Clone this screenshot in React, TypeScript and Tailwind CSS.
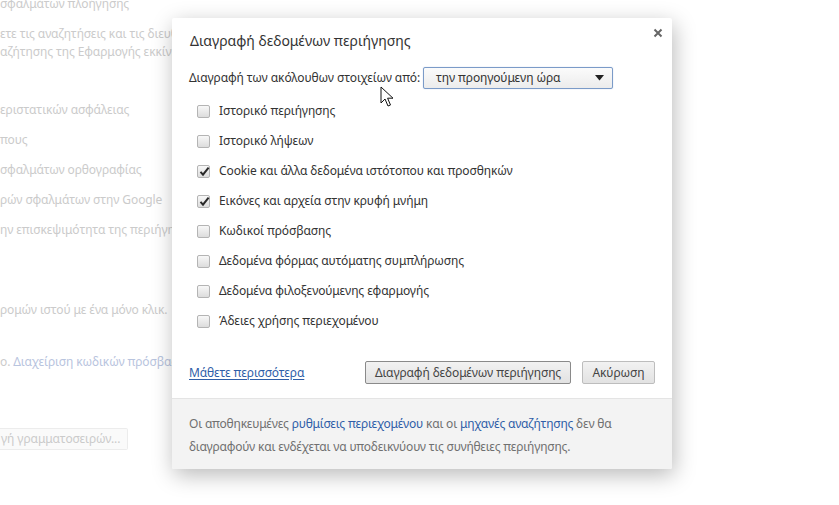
const font = { fontFamily: '"Noto Sans", "Open Sans", sans-serif' }

const items = [
    { label: 'Ιστορικό περιήγησης', checked: false },
    { label: 'Ιστορικό λήψεων', checked: false },
    { label: 'Cookie και άλλα δεδομένα ιστότοπου και προσθηκών', checked: true },
    { label: 'Εικόνες και αρχεία στην κρυφή μνήμη', checked: true },
    { label: 'Κωδικοί πρόσβασης', checked: false },
    { label: 'Δεδομένα φόρμας αυτόματης συμπλήρωσης', checked: false },
    { label: 'Δεδομένα φιλοξενούμενης εφαρμογής', checked: false },
    { label: 'Άδειες χρήσης περιεχομένου', checked: false },
]

function Checkbox({ checked }: { checked: boolean }) {
    return (
        <span className="relative flex h-[13px] w-[13px] shrink-0 items-center justify-center rounded-[2px] border border-[#b4b4b4] bg-gradient-to-b from-[#f8f8f8] to-[#dcdcdc]">
            {checked && (
                <svg width="11" height="11" viewBox="0 0 11 11" className="absolute left-[1px] top-[0px]">
                    <path d="M1.5 5.8 L4 8.6 L9.6 1.6" fill="none" stroke="#2a2a2a" strokeWidth="2" />
                </svg>
            )}
        </span>
    )
}

function Cursor() {
    return (
        <svg width="17" height="23" viewBox="0 0 17 23" className="absolute left-[380px] top-[86px]">
            <path
                d="M1 1 L1 17 L5 13 L8 20 L10.5 19 L7.6 12.2 L13 12.2 Z"
                fill="#fff"
                stroke="#111"
                strokeWidth="1"
                strokeLinejoin="round"
            />
        </svg>
    )
}

export default function App() {
    return (
        <div className="relative h-[505px] w-[839px] overflow-hidden bg-white text-[12px] tracking-[-0.1px]" style={font}>
            {/* faded settings page behind the dialog */}
            <div className="flex w-[172px] flex-col overflow-hidden whitespace-nowrap text-[12px] leading-[18px] text-[#cbcbcb]">
                <div className="-mt-[5px]">σφαλμάτων πλοήγησης</div>
                <div className="mt-[12px]">ετε τις αναζητήσεις και τις διευθ</div>
                <div>αζήτησης της Εφαρμογής εκκίνη</div>
                <div className="mt-[40px]">εριστατικών ασφάλειας</div>
                <div className="mt-[12px]">πους</div>
                <div className="mt-[12px]">σφαλμάτων ορθογραφίας</div>
                <div className="mt-[12px]">ρών σφαλμάτων στην Google</div>
                <div className="mt-[12px]">ην επισκεψιμότητα της περιήγησ</div>
                <div className="mt-[62px]">ρομών ιστού με ένα μόνο κλικ.</div>
                <div className="mt-[34px]">
                    ο. <span className="text-[#b8c4de]">Διαχείριση κωδικών πρόσβασ</span>
                </div>
                <div className="mt-[57px] flex h-[22px] w-[128px] items-center rounded-r-[2px] border border-l-0 border-[#ececec] bg-[#fafafa] pl-[1px]">
                    γή γραμματοσειρών...
                </div>
            </div>

            {/* dialog */}
            <div className="absolute left-[172px] top-[18px] w-[500px] rounded-[2px] bg-white text-[#333] shadow-[2px_6px_22px_rgba(0,0,0,0.28)]">
                <div className="relative px-[18px] pt-[13px]">
                    <h1 className="h-[20px] text-[14px] leading-[20px] tracking-normal text-[#333]">Διαγραφή δεδομένων περιήγησης</h1>
                    <button className="absolute right-[9px] top-[10px] flex h-[10px] w-[10px] items-center justify-center">
                        <svg width="10" height="10" viewBox="0 0 10 10">
                            <path d="M1.5 1.5 L8.5 8.5 M8.5 1.5 L1.5 8.5" stroke="#666" strokeWidth="2" />
                        </svg>
                    </button>
                </div>

                <div className="mt-[16px] flex h-[22px] items-center px-[17px]">
                    <span className="mr-[3px]">Διαγραφή των ακόλουθων στοιχείων από:</span>
                    <div className="flex h-[22px] w-[190px] items-center justify-between rounded-[2px] border border-[#7b9bc8] bg-gradient-to-b from-[#fbfbfb] to-[#ececec] pl-[12px] pr-[8px] shadow-[0_0_1px_rgba(80,120,200,0.5)]">
                        <span>την προηγούμενη ώρα</span>
                        <svg width="9" height="6" viewBox="0 0 9 6">
                            <path d="M0 0 L9 0 L4.5 5.5 Z" fill="#222" />
                        </svg>
                    </div>
                </div>

                <div className="mt-[7px] flex flex-col pl-[25px]">
                    {items.map((item) => (
                        <label key={item.label} className="flex h-[30px] items-center gap-[9px]">
                            <Checkbox checked={item.checked} />
                            <span>{item.label}</span>
                        </label>
                    ))}
                </div>

                <div className="mt-[25px] flex items-center px-[17px] pb-[14px]">
                    <a className="text-[#2f5ea8] underline underline-offset-2">Μάθετε περισσότερα</a>
                    <div className="ml-auto flex gap-[11px]">
                        <button className="h-[23px] w-[206px] rounded-[2px] border border-[#8a8a8a] bg-gradient-to-b from-[#f2f2f2] to-[#e2e2e2] text-[#444]">
                            Διαγραφή δεδομένων περιήγησης
                        </button>
                        <button className="h-[23px] w-[73px] rounded-[2px] border border-[#bdbdbd] bg-gradient-to-b from-[#f2f2f2] to-[#e2e2e2] text-[#444]">
                            Ακύρωση
                        </button>
                    </div>
                </div>

                <div className="rounded-b-[2px] border-t border-[#e4e4e4] bg-[#f3f3f3] px-[17px] pb-[11px] pt-[13px] leading-[23px] tracking-[-0.2px] text-[#707070]">
                    Οι αποθηκευμένες <a className="text-[#2f5ea8]">ρυθμίσεις περιεχομένου</a> και οι{' '}
                    <a className="text-[#2f5ea8]">μηχανές αναζήτησης</a> δεν θα
                    <br />
                    διαγραφούν και ενδέχεται να υποδεικνύουν τις συνήθειες περιήγησης.
                </div>
            </div>

            <Cursor />
        </div>
    )
}
